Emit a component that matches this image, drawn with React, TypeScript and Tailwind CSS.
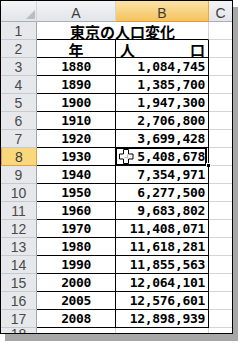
const data: [string, string][] = [
  ["1880", "1,084,745"],
  ["1890", "1,385,700"],
  ["1900", "1,947,300"],
  ["1910", "2,706,800"],
  ["1920", "3,699,428"],
  ["1930", "5,408,678"],
  ["1940", "7,354,971"],
  ["1950", "6,277,500"],
  ["1960", "9,683,802"],
  ["1970", "11,408,071"],
  ["1980", "11,618,281"],
  ["1990", "11,855,563"],
  ["2000", "12,064,101"],
  ["2005", "12,576,601"],
  ["2008", "12,898,939"],
]

function RowHead({ n, active }: { n: number; active?: boolean }) {
  return (
    <div
      className={
        active
          ? "w-[36px] shrink-0 flex items-center justify-center border border-t-0 border-[#e2a13c] bg-[#f9d77c] text-[14px] leading-none text-[#3c3c3c] font-['Liberation_Sans',sans-serif]"
          : "w-[36px] shrink-0 flex items-center justify-center border-r border-b border-r-[#9fa6ae] border-b-[#c6cad0] bg-[#e6e8eb] text-[14px] leading-none text-[#4a4a4a] font-['Liberation_Sans',sans-serif]"
      }
    >
      <span className="pt-[1px]">{n}</span>
    </div>
  )
}

function Cursor() {
  return (
    <svg className="absolute left-[3px] top-[1px]" width="15" height="15" viewBox="0 0 15 15">
      <path
        d="M4.5 0.5h5v4.5h4.5v5h-4.5v4.5h-5v-4.5h-4v-5h4z"
        fill="white"
        stroke="black"
        strokeWidth="1"
      />
      <path d="M8.5 5.5v4M5.5 8.5h3" stroke="#bdbdbd" strokeWidth="1" />
    </svg>
  )
}

const jp = "pt-[2px] text-[15px] leading-none font-bold text-black font-['Noto_Sans_CJK_JP',sans-serif]"

export default function App() {
  return (
    <div className="w-[240px] h-[347px] bg-white">
      <div className="w-[233px] border border-black bg-white shadow-[5px_7px_0_#a7a7a7]">
        {/* column headers */}
        <div className="flex h-[21px]">
          <div className="w-[36px] shrink-0 relative border-r border-b border-r-[#d2d6dc] border-b-[#a9afb7] bg-gradient-to-b from-[#f3f4f6] to-[#e2e5e9]">
            <svg className="absolute left-[25px] top-[9px]" width="9" height="9" viewBox="0 0 9 9">
              <polygon points="9,0 9,9 0,9" fill="#b9bcc1" />
            </svg>
          </div>
          <div className="w-[79px] shrink-0 flex items-center justify-center border-r border-b border-r-[#d2d6dc] border-b-[#a9afb7] bg-gradient-to-b from-[#f3f4f6] to-[#e2e5e9] text-[14px] leading-none text-[#3c3c3c] font-['Liberation_Sans',sans-serif]">
            <span className="pt-[3px]">A</span>
          </div>
          <div className="w-[93px] shrink-0 flex items-center justify-center border-r border-b border-r-[#e8a744] border-b-[#f09438] bg-gradient-to-b from-[#fae3a6] to-[#f5c35c] text-[14px] leading-none text-[#3c3c3c] font-['Liberation_Sans',sans-serif]">
            <span className="pt-[3px]">B</span>
          </div>
          <div className="w-[23px] shrink-0 flex items-center justify-center border-b border-b-[#a9afb7] bg-gradient-to-b from-[#f3f4f6] to-[#e2e5e9] text-[14px] leading-none text-[#3c3c3c] font-['Liberation_Sans',sans-serif]">
            <span className="pt-[3px]">C</span>
          </div>
        </div>

        {/* row 1: title */}
        <div className="flex h-[18px]">
          <RowHead n={1} />
          <div className="w-[172px] shrink-0 flex items-center justify-center border-r border-b border-r-[#d4d4d4] border-b-black">
            <span className={jp}>東京の人口変化</span>
          </div>
          <div className="w-[23px] shrink-0 border-b border-b-[#d4d4d4]" />
        </div>

        {/* row 2: labels */}
        <div className="flex h-[18px]">
          <RowHead n={2} />
          <div className="w-[79px] shrink-0 flex items-center justify-center border-r border-b border-black">
            <span className={jp}>年</span>
          </div>
          <div className="w-[93px] shrink-0 flex items-center justify-between pl-[4px] pr-[3px] border-r border-b border-black">
            <span className={jp}>人</span>
            <span className={jp}>口</span>
          </div>
          <div className="w-[23px] shrink-0 border-b border-b-[#d4d4d4]" />
        </div>

        {data.map(([year, pop], i) => {
          const n = i + 3
          const active = n === 8
          return (
            <div key={year} className="flex h-[18px]">
              <RowHead n={n} active={active} />
              <div className="w-[79px] shrink-0 flex items-center justify-center border-r border-b border-black text-[13px] leading-none font-bold tracking-[-0.4px] text-black font-['DejaVu_Sans_Mono',monospace]">
                {year}
              </div>
              <div className="w-[93px] shrink-0 relative flex items-center justify-end pr-[3px] border-r border-b border-black text-[13px] leading-none font-bold tracking-[-0.3px] text-black font-['DejaVu_Sans_Mono',monospace]">
                {pop}
                {active && (
                  <>
                    <div className="absolute -left-[1px] -top-[1px] right-[1px] -bottom-[1px] border-2 border-black" />
                    <div className="absolute -right-[3px] -bottom-[3px] w-[5px] h-[5px] bg-black border border-white" />
                    <Cursor />
                  </>
                )}
              </div>
              <div className="w-[23px] shrink-0 border-b border-b-[#d4d4d4]" />
            </div>
          )
        })}

        {/* row 18, cut off by the frame */}
        <div className="h-[5px] overflow-hidden">
          <div className="flex h-[18px]">
            <div className="w-[36px] shrink-0 flex justify-center border-r border-r-[#9fa6ae] bg-[#e6e8eb] text-[14px] leading-none text-[#4a4a4a] font-['Liberation_Sans',sans-serif]">
              <span className="-mt-[1px]">18</span>
            </div>
            <div className="w-[79px] shrink-0 border-r border-r-[#d4d4d4]" />
            <div className="w-[93px] shrink-0 border-r border-r-[#d4d4d4]" />
            <div className="w-[23px] shrink-0" />
          </div>
        </div>
      </div>
    </div>
  )
}
